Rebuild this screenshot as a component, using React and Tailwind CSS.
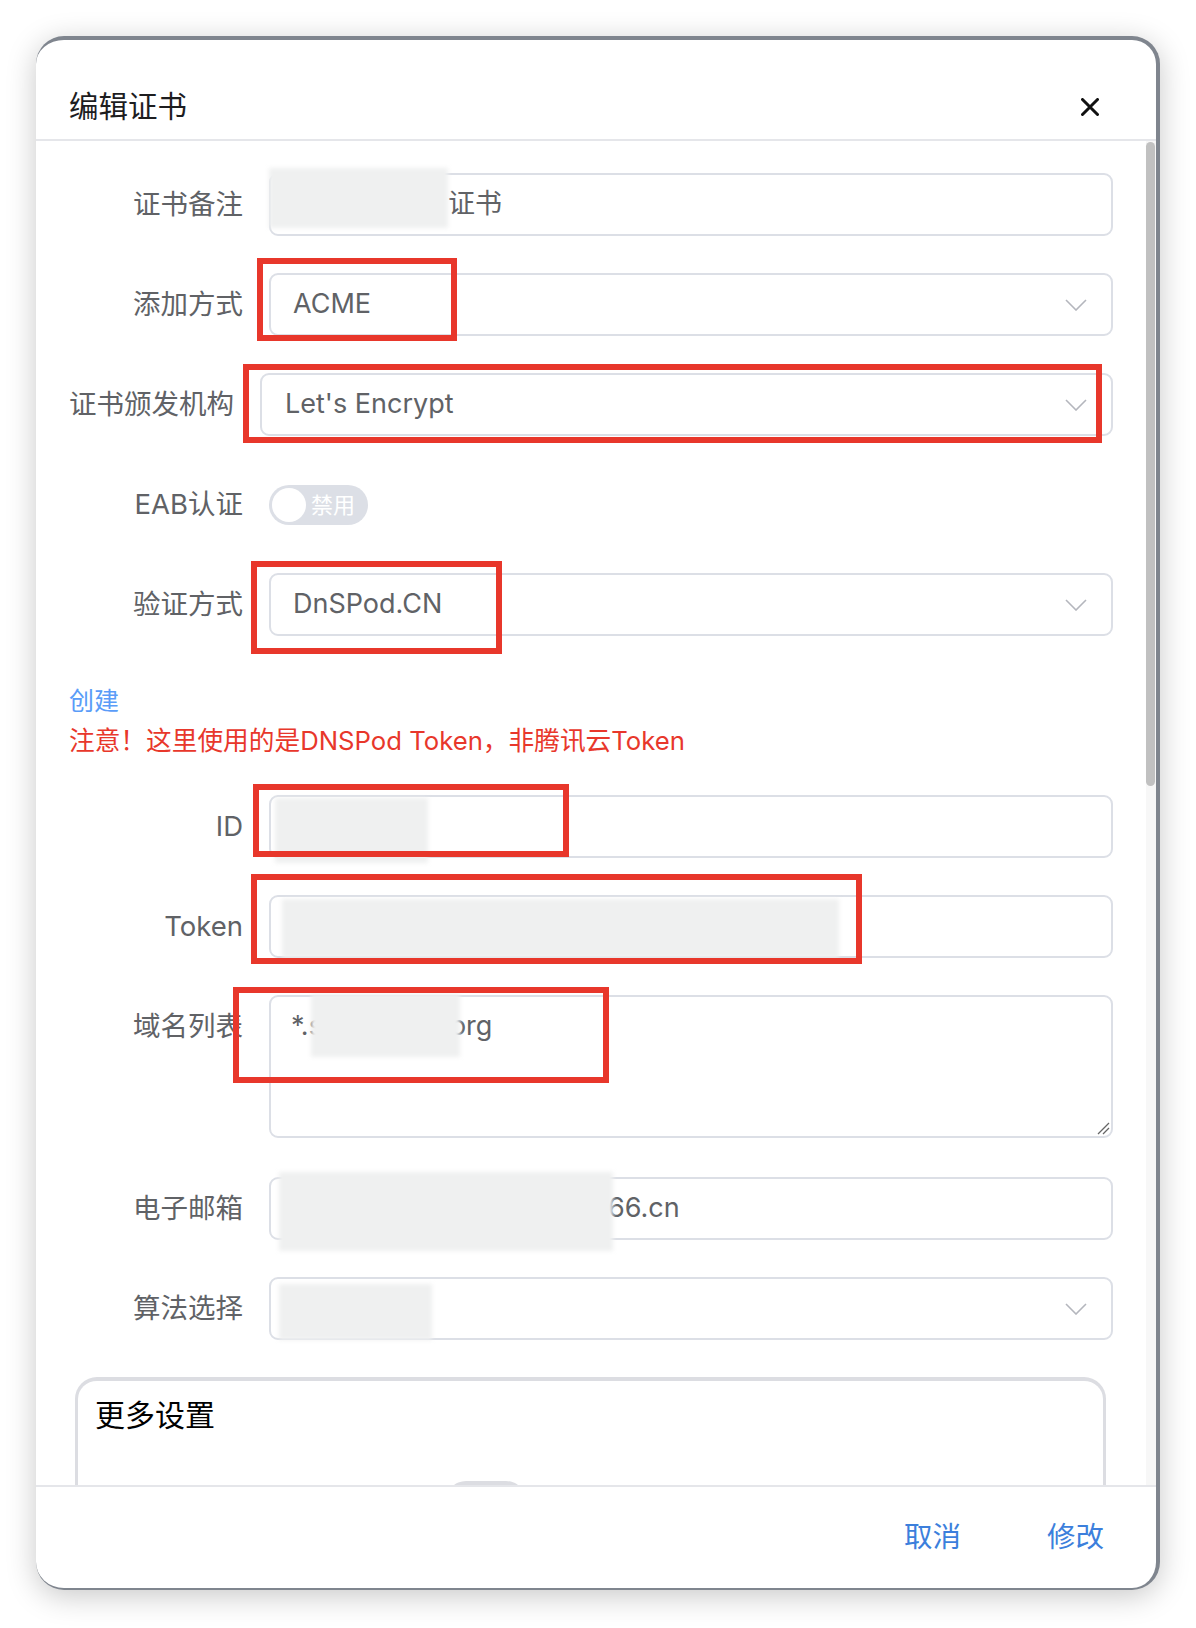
import React from 'react';

const Chevron = () => (
	<svg width="22" height="12" viewBox="0 0 22 12" fill="none" className="absolute right-[24px] top-1/2 -translate-y-1/2">
		<path d="M1 1l10 10L21 1" stroke="#b4b6bd" strokeWidth="1.6" />
	</svg>
);

const Row = ({ label, labelClass = 'w-[174px]', align = 'items-center', mb = 'mb-[37px]', children }) => (
	<div className={`flex ${align} px-[33px] ${mb}`}>
		<label className={`${labelClass} shrink-0 text-right mr-[26px] text-[27.5px] leading-[63px] text-[#606266]`}>{label}</label>
		<div className="relative flex-1">{children}</div>
	</div>
);

const Input = ({ children, select, className = 'pl-[22px]' }) => (
	<div className={`relative h-[63px] border-2 border-[#dcdfe6] rounded-[9px] bg-white flex items-center text-[27px] text-[#606266] ${className}`}>
		{children}
		{select && <Chevron />}
	</div>
);

const Red = ({ className }) => (
	<div className={`absolute z-10 pointer-events-none border-[6px] border-[#e8372b] ${className}`} />
);

const Blur = ({ className }) => (
	<div className={`absolute z-[5] bg-[#eff0f0] blur-[2px] ${className}`} />
);

export default function App() {
	return (
		<div className="w-[1196px] h-[1628px] bg-white pt-[36px] pl-[36px] font-[Inter,'Noto_Sans_CJK_SC',sans-serif]">
			<div className="w-[1124px] h-[1554px] bg-white rounded-[28px] overflow-hidden flex flex-col border-t-4 border-r-4 border-b-2 border-l-0 border-[#7f858e] shadow-[0_6px_30px_rgba(0,0,0,0.22)]">
				{/* header */}
				<div className="h-[99px] shrink-0 flex items-center justify-between pt-[34px] pl-[33px] pr-[57px]">
					<h2 className="text-[29.5px] text-[#1d1d1f]">编辑证书</h2>
					<svg width="18" height="18" viewBox="0 0 18 18">
						<path d="M1.5 1.5l15 15M16.5 1.5l-15 15" stroke="#111" strokeWidth="3" strokeLinecap="round" />
					</svg>
				</div>
				<div className="h-[2px] bg-[#e5e6ea] shrink-0" />

				{/* body */}
				<div className="flex-1 flex overflow-hidden">
					<div className="flex-1 pt-[32px]">
						<Row label="证书备注">
							<Input className="pl-[177px]">证书</Input>
							<Blur className="left-0 top-[-5px] w-[179px] h-[60px]" />
						</Row>
						<Row label="添加方式">
							<Input select>ACME</Input>
							<Red className="left-[-12px] top-[-15px] w-[200px] h-[83px]" />
						</Row>
						<Row label="证书颁发机构" labelClass="w-[165px]">
							<Input select className="pl-[23px]">Let's Encrypt</Input>
							<Red className="left-[-17px] top-[-9px] w-[859px] h-[79px]" />
						</Row>
						<Row label="EAB认证">
							<div className="h-[63px] flex items-center">
								<div className="w-[99px] h-[40px] rounded-full bg-[#dcdfe6] flex items-center pl-[3px]">
									<div className="w-[34px] h-[34px] rounded-full bg-white" />
									<span className="ml-[5px] text-[22px] text-white leading-none">禁用</span>
								</div>
							</div>
						</Row>
						<Row label="验证方式">
							<Input select>DnSPod.CN</Input>
							<Red className="left-[-18px] top-[-12px] w-[251px] h-[93px]" />
						</Row>

						<div className="px-[33px] pt-[8px] mb-[34px]">
							<div className="text-[25px] leading-[40px] text-[#5a9cf8]">创建</div>
							<div className="text-[25.7px] leading-[40px] text-[#e8372b]">注意！这里使用的是DNSPod Token，非腾讯云Token</div>
						</div>

						<Row label="ID">
							<Input />
							<Blur className="left-[6px] top-[3px] w-[153px] h-[65px]" />
							<Red className="left-[-16px] top-[-11px] w-[316px] h-[73px]" />
						</Row>
						<Row label="Token">
							<Input />
							<Blur className="left-[13px] top-[4px] w-[557px] h-[59px]" />
							<Red className="left-[-18px] top-[-21px] w-[611px] h-[90px]" />
						</Row>
						<Row label="域名列表" align="items-start" mb="mb-[39px]">
							<div className="relative h-[143px] border-2 border-[#dcdfe6] rounded-[9px] bg-white text-[27px] text-[#606266] pl-[20px]">
								<div className="h-[59px] flex items-center">
									<span>*.s</span>
									<span className="inline-block w-[127px]" />
									<span>org</span>
								</div>
								<svg width="14" height="14" viewBox="0 0 14 14" className="absolute right-[1px] bottom-[1px]">
									<path d="M13 2L2 13M13 7L7 13" stroke="#666" strokeWidth="1.3" />
								</svg>
							</div>
							<Blur className="left-[42px] top-[-1px] w-[149px] h-[63px]" />
							<Red className="left-[-36px] top-[-8px] w-[376px] h-[96px]" />
						</Row>
						<Row label="电子邮箱">
							<Input className="pl-[337px]">66.cn</Input>
							<Blur className="left-[10px] top-[-5px] w-[334px] h-[79px]" />
						</Row>
						<Row label="算法选择">
							<Input select />
							<Blur className="left-[10px] top-[7px] w-[153px] h-[56px]" />
						</Row>

						{/* more settings */}
						<div className="ml-[39px] mr-[40px] border-t-4 border-x-[3px] border-[#dcdde2] rounded-t-[22px] pt-[14px] pl-[17px]">
							<div className="text-[30px] leading-[40px] text-black">更多设置</div>
							<div className="mt-[46px] ml-[351px] w-[80px] h-[20px] rounded-t-full bg-[#dcdde2]" />
						</div>
					</div>
					<div className="w-[10px] shrink-0 bg-[#f7f7f7] pt-[1px]">
						<div className="w-[9px] h-[644px] rounded-full bg-[#c1c1c1]" />
					</div>
				</div>

				{/* footer */}
				<div className="h-[2px] bg-[#e5e6ea] shrink-0" />
				<div className="h-[101px] shrink-0 flex items-center justify-end gap-[86px] pr-[52px]">
					<button className="text-[28.5px] text-[#3c7fdc]">取消</button>
					<button className="text-[28.5px] text-[#3c7fdc]">修改</button>
				</div>
			</div>
		</div>
	);
}
